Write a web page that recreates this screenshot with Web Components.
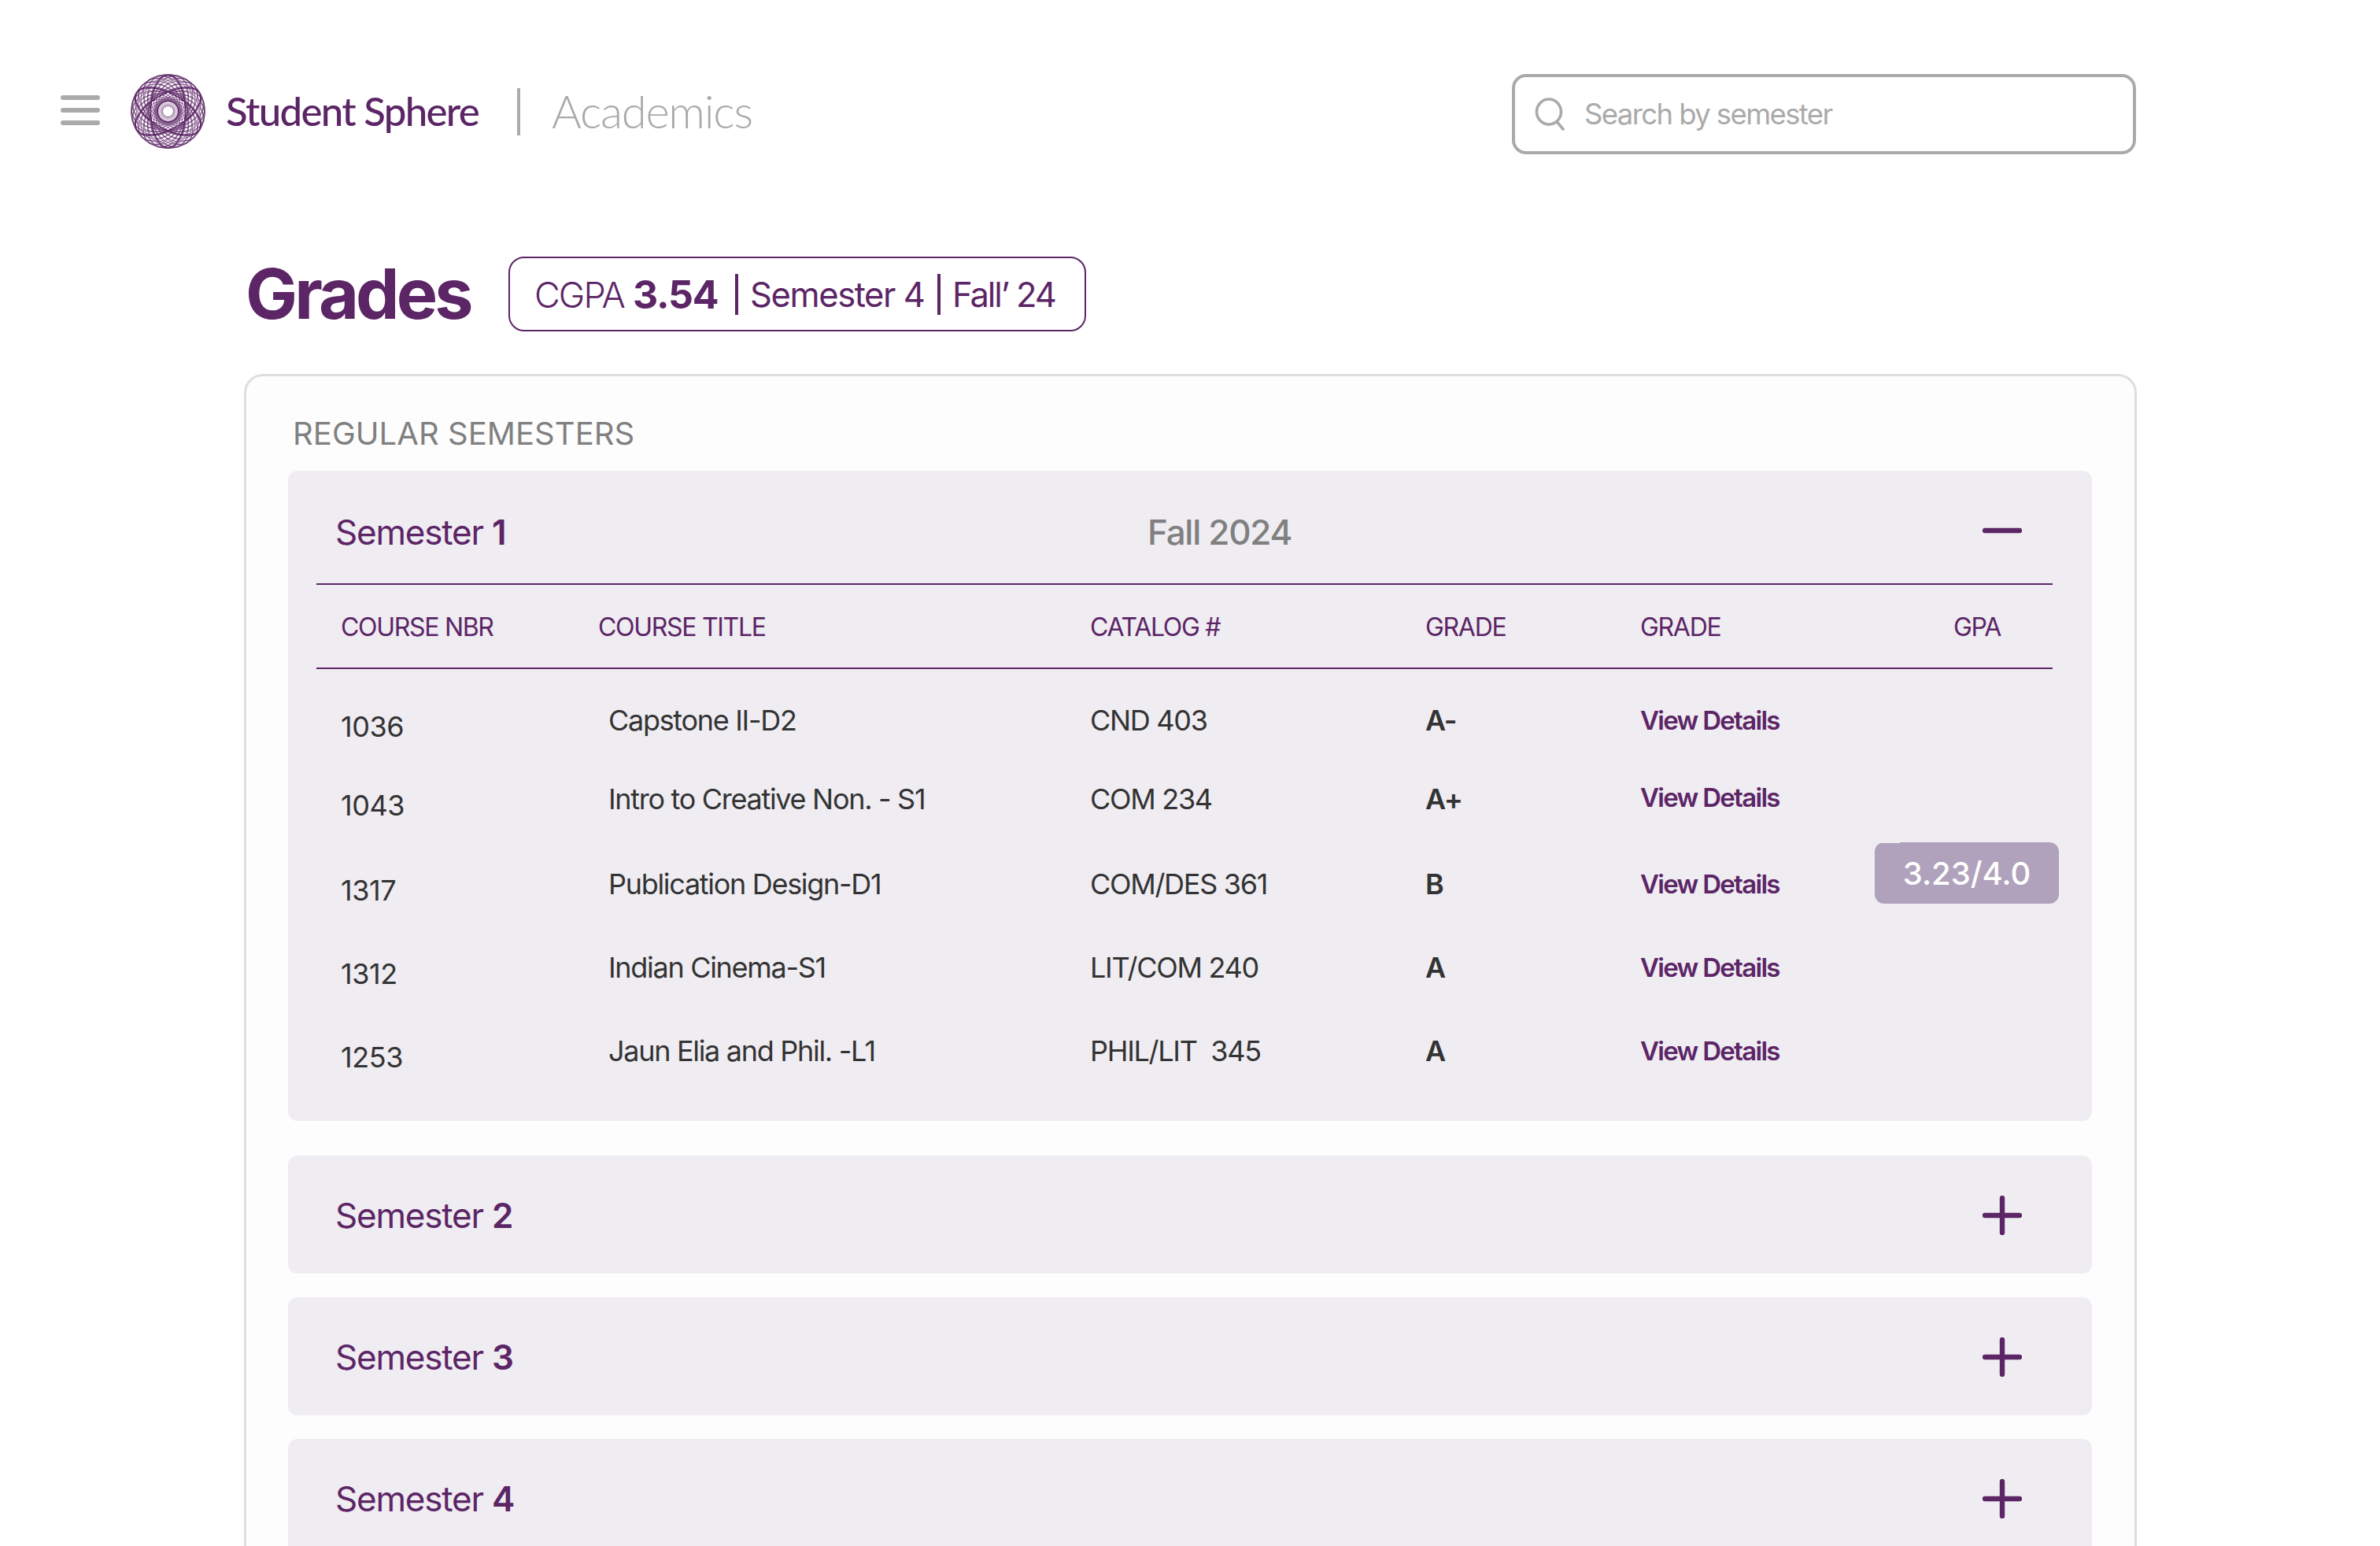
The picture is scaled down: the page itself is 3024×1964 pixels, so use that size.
<!DOCTYPE html>
<html lang="en"><head><meta charset="utf-8"><title>Grades</title>
<style>
html,body{margin:0;background:#fff;height:1964px;overflow:hidden;font-family:Inter,"Liberation Sans",sans-serif}
</style></head><body>
<grades-app>
  <app-header></app-header>
  <grades-title></grades-title>
  <semester-card label="REGULAR SEMESTERS">
    <semester-panel number="1" term="Fall 2024" open>
      <course-row nbr="1036" name="Capstone II-D2" cat="CND 403" grade="A-" h="113" pad="43" link="0"></course-row>
      <course-row nbr="1043" name="Intro to Creative Non. - S1" cat="COM 234" grade="A+" h="108" pad="30" link="-2"></course-row>
      <course-row nbr="1317" name="Publication Design-D1" cat="COM/DES 361" grade="B" h="107" pad="30" link="0"></course-row>
      <course-row nbr="1312" name="Indian Cinema-S1" cat="LIT/COM 240" grade="A" h="106" pad="29" link="0"></course-row>
      <course-row nbr="1253" name="Jaun Elia and Phil. -L1" cat="PHIL/LIT&#160;&#160;345" grade="A" h="119" pad="29" link="0" last></course-row>
    </semester-panel>
    <semester-panel number="2"></semester-panel>
    <semester-panel number="3"></semester-panel>
    <semester-panel number="4"></semester-panel>
  </semester-card>
</grades-app>
<script>
const PURPLE='#5c2566';
function def(name,render,css){
  customElements.define(name,class extends HTMLElement{
    constructor(){super();this.attachShadow({mode:'open'});}
    connectedCallback(){this.shadowRoot.innerHTML='<style>'+css+'</style>'+render(this);}
  });
}
def('grades-app',()=>'<slot></slot>',`:host{display:block;width:3024px;height:1964px;overflow:hidden;box-sizing:border-box;padding-top:94px}`);

function spiro(){
  const c=47.5;let s='';
  const el=(rx,ry,dx,a,w,o)=>`<ellipse cx="${c+dx}" cy="${c}" rx="${rx}" ry="${ry}" transform="rotate(${a} ${c} ${c})" stroke-width="${w}" opacity="${o}"/>`;
  for(let i=0;i<24;i++)s+=el(30,30,17,i*15,.7,.95);
  for(let i=0;i<12;i++)s+=el(47,24,0,i*15,.7,.95);
  for(let i=0;i<18;i++)s+=el(12.5,12.5,5.5,i*20,.4,.55);
  for(let i=0;i<3;i++)s+=el(46,22,0,i*60+30,1.5,1);
  return `<svg width="95" height="95" viewBox="0 0 95 95" fill="none" stroke="${PURPLE}">${s}</svg>`;
}
def('app-header',()=>`
  <div class="left">
    <div class="menu"><i></i><i></i><i></i></div>
    <div class="logo">${spiro()}</div>
    <div class="brand">Student Sphere</div>
    <div class="sep"></div>
    <div class="sect">Academics</div>
  </div>
  <div class="search">
    <svg width="40" height="42" viewBox="0 0 40 42" fill="none" stroke="#aaa" stroke-width="3.6" stroke-linecap="round"><ellipse cx="18" cy="18" rx="15.5" ry="16"/><path d="M28 30.5 36 40"/></svg>
    <span>Search by semester</span>
  </div>`,`
  :host{display:flex;justify-content:space-between;align-items:flex-start;padding:0 310px 0 77px;height:232px}
  .left{display:flex;align-items:center;height:95px}
  .menu{display:flex;flex-direction:column;gap:10px;width:50px;margin-right:39px;padding-bottom:3px}
  .menu i{display:block;height:6px;background:#aaa;border-radius:3px}
  .logo{height:95px;width:95px;margin-right:26px}
  .brand{font:500 51px/60px Lato,sans-serif;color:${PURPLE};letter-spacing:-1.7px;width:370px;white-space:nowrap;padding-bottom:1px}
  .sep{width:4px;height:60px;background:#aaa;margin-right:40px}
  .sect{font:300 58px/70px Lato,sans-serif;color:#aaa;letter-spacing:-1.3px;white-space:nowrap;padding-bottom:2px}
  .search{box-sizing:border-box;width:793px;height:102px;border:4px solid #aaa;border-radius:18px;display:flex;align-items:center;padding-left:25px;gap:23px;background:#fff}
  .search span{font:400 36.5px/46px Inter,sans-serif;color:#aaa;letter-spacing:-1.6px;white-space:nowrap}
`);
def('grades-title',()=>`
  <h1>Grades</h1>
  <div class="badge"><span class="c">CGPA</span><b>3.54</b><i></i><span class="s">Semester 4</span><i></i><span class="f">Fall’ 24</span></div>`,`
  :host{display:flex;align-items:center;height:95px;margin-left:311px;margin-bottom:54px}
  h1{margin:0 48px 0 1px;font:700 88px/95px Inter,sans-serif;color:${PURPLE};letter-spacing:-3.9px;width:286px;white-space:nowrap}
  .badge{box-sizing:border-box;height:95px;width:734px;border:2.5px solid ${PURPLE};border-radius:20px;display:flex;align-items:center;padding-left:31px;color:${PURPLE};font:400 43.5px/54px Inter,sans-serif;letter-spacing:-1.4px;white-space:nowrap}
  .badge .c{font-weight:300;width:125px;font-size:45px;letter-spacing:-1.9px;padding-top:2px}
  .badge b{font-weight:700;font-size:50px;letter-spacing:-1.3px;width:130px}
  .badge i{display:block;width:4px;height:52px;background:${PURPLE};margin:0 15px 0 0}
  .badge .s{width:238px}
  .badge .f{letter-spacing:-2.1px}
`);
def('semester-card',h=>`<div class="label">${h.getAttribute('label')}</div><slot></slot>`,`
  :host{display:block;box-sizing:border-box;margin-left:310px;width:2405px;min-height:1600px;background:#fdfdfd;border:3px solid #dedede;border-radius:24px;padding:49px 54px 60px 53px}
  .label{font:400 40px/48px Inter,sans-serif;color:#808080;letter-spacing:.05px;padding-left:6px;margin-bottom:23px;white-space:nowrap}
`);
const icon=open=>`<svg width="50" height="50" viewBox="0 0 50 50" stroke="${PURPLE}" stroke-linecap="round" fill="none" stroke-width="6.4">${open?'<path d="M3 25H47"/>':'<path d="M3 25H47M25 3V47"/>'}</svg>`;
def('semester-panel',h=>{
  const open=h.hasAttribute('open');
  return `<div class="head ${open?'open':''}">
     <div class="name">Semester <b>${h.getAttribute('number')}</b></div>
     <div class="term">${h.getAttribute('term')||''}</div>
     <div class="ic">${icon(open)}</div>
   </div>`+(open?`<table-head></table-head><div class="rows"><slot></slot></div><div class="gpa">3.23/4.0</div>`:'');
},`
  :host{display:block;position:relative;background:#efecf2;border-radius:12px;margin-bottom:30px;padding:0 50px 0 36px;min-height:150px;box-sizing:border-box}
  :host([open]){margin-bottom:44px;height:826px}
  .head{display:grid;grid-template-columns:1056px 1fr 50px;padding:50px 39px 0 0;height:100px;box-sizing:content-box}
  .head.open{padding-top:52px;height:91px}
  .name{padding-left:24px;font:400 44px/53px Inter,sans-serif;color:${PURPLE};letter-spacing:-1.2px;white-space:nowrap}
  .name b{font-weight:600}
  .term{font:500 44px/53px Inter,sans-serif;color:#808080;letter-spacing:-1.3px;white-space:nowrap}
  .ic{height:50px;padding-top:1px}
  .head.open .ic{margin-top:-1px;padding-top:0}
  .rows{position:relative;z-index:1}
  .gpa{position:absolute;left:2016px;top:472px;width:234px;height:78px;border-radius:12px;background:#b0a2bc;color:#fff;font:500 40px/80px Inter,sans-serif;text-align:center}
`);
const GRID='grid-template-columns:327px 625px 426px 273px 398px 1fr;padding-left:31px';
def('table-head',()=>['COURSE NBR','COURSE TITLE','CATALOG #','GRADE','GRADE','GPA'].map(t=>`<div>${t}</div>`).join(''),`
  :host{display:grid;${GRID};border-top:2.5px solid ${PURPLE};border-bottom:2.5px solid ${PURPLE};padding-top:34px;padding-bottom:32px;height:39px;box-sizing:content-box}
  div{font:400 32px/39px Inter,sans-serif;color:${PURPLE};letter-spacing:-1.3px;white-space:nowrap}
`);
def('course-row',h=>{
  const g=n=>h.getAttribute(n);
  h.style.height=g('h')+'px';
  return `<div class="n" style="padding-top:${+g('pad')+8}px">${g('nbr')}</div>
  <div class="t" style="padding-top:${g('pad')}px">${g('name')}</div>
  <div class="c" style="padding-top:${g('pad')}px">${g('cat')}</div>
  <div class="g" style="padding-top:${g('pad')}px">${g('grade')}</div>
  <div class="v" style="padding-top:${+g('pad')+ +g('link')}px">View Details</div>`;
},`
  :host{display:grid;box-sizing:border-box;${GRID};grid-template-columns:327px 625px 426px 273px 1fr;margin-right:194px;border-bottom:2px solid #f1edef;align-items:start}
  :host([last]){border-bottom:0}
  div{font:400 36px/44px Inter,sans-serif;color:#333;letter-spacing:-1.3px;white-space:nowrap}
  .n{letter-spacing:-.45px}
  .t{padding-left:13px}
  .g{font-weight:600}
  .v{font-size:33px;font-weight:600;color:${PURPLE};letter-spacing:-1.7px}
`);
</script>
</body></html>
